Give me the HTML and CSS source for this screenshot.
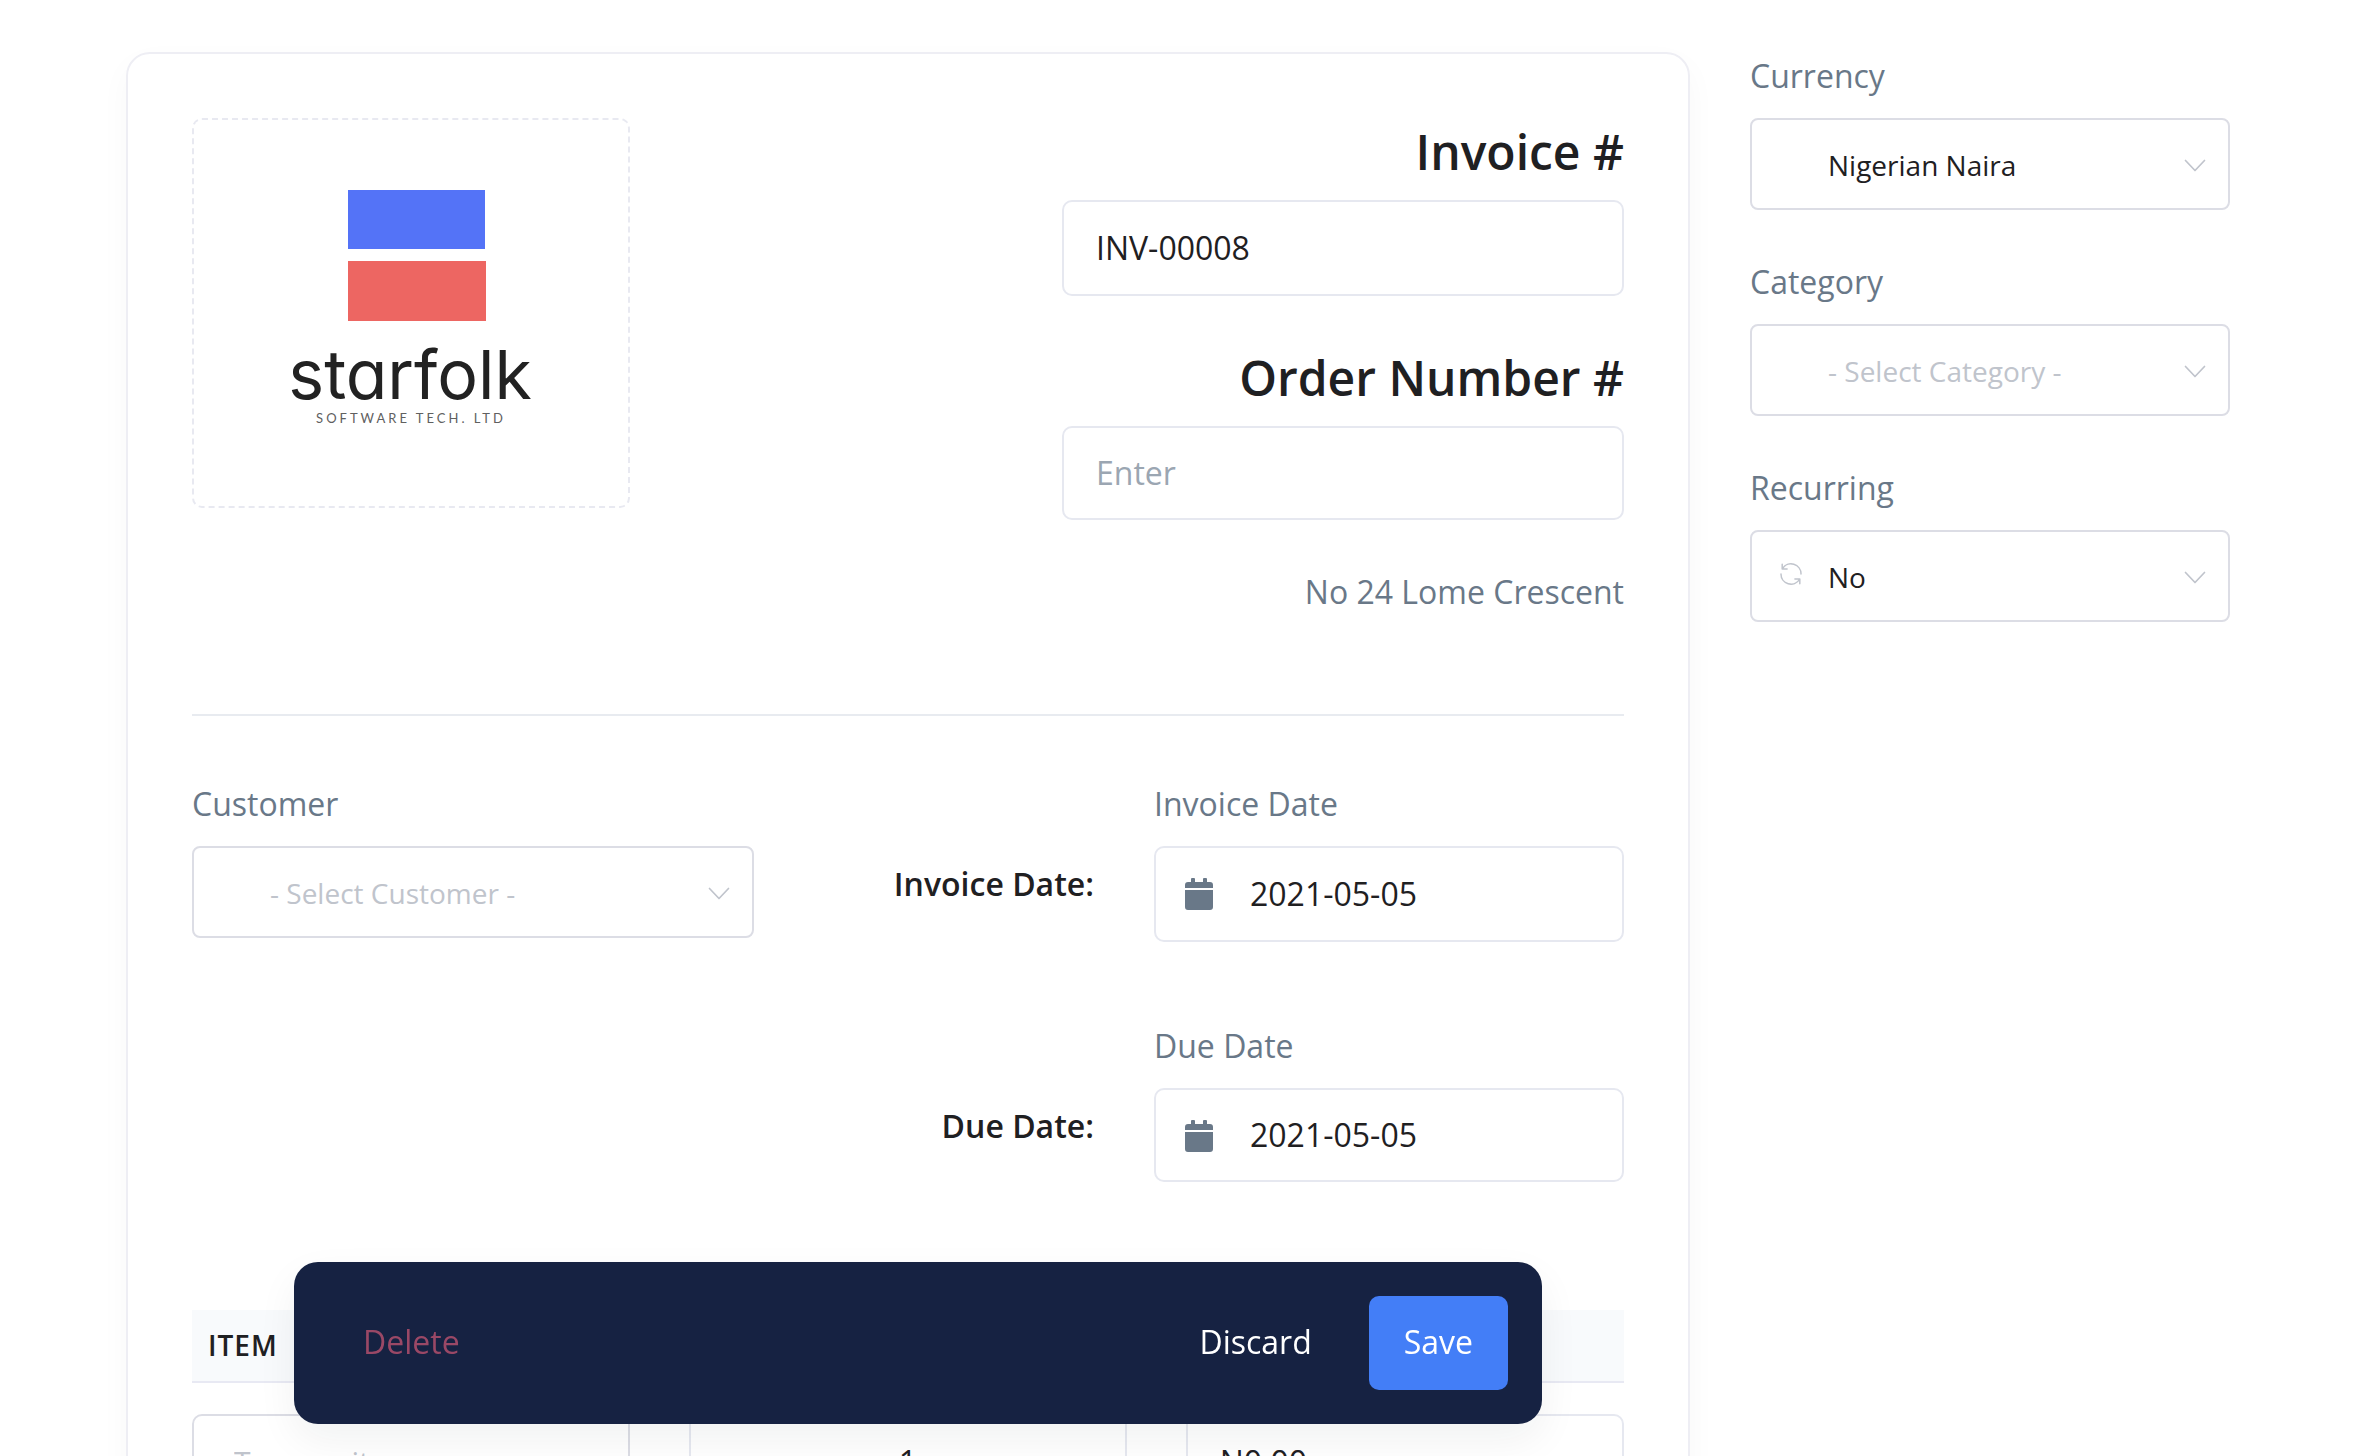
FILE: index.html
```html
<!DOCTYPE html>
<html lang="en">
<head>
<meta charset="utf-8">
<meta name="viewport" content="width=device-width, initial-scale=1">
<title>Invoice</title>
<link rel="stylesheet" href="styles.css">
</head>
<body>
<svg class="sprite" aria-hidden="true">
  <symbol id="chevron" viewBox="0 0 22 14"><path d="M1.5 1.5 11 11.5 20.5 1.5" fill="none" stroke="currentColor" stroke-width="1.7" stroke-linecap="round" stroke-linejoin="round"/></symbol>
  <symbol id="calendar" viewBox="0 0 28 32"><path d="M0 12h28v17a3 3 0 0 1-3 3H3a3 3 0 0 1-3-3zM28 10V7a3 3 0 0 0-3-3h-3V1a1 1 0 0 0-1-1h-2a1 1 0 0 0-1 1v3h-8V1a1 1 0 0 0-1-1H7a1 1 0 0 0-1 1v3H3a3 3 0 0 0-3 3v3z" fill="currentColor"/></symbol>
  <symbol id="refresh" viewBox="0 0 22 22"><path d="M2.5 5.6A10 10 0 0 1 21 11M2.2 1.2v4.9h4.9M1 11a10 10 0 0 0 18.5 5.4M19.8 20.8v-4.9h-4.9" fill="none" stroke="currentColor" stroke-width="1.5" stroke-linecap="round" stroke-linejoin="round"/></symbol>
</svg>
<form class="page">
  <main class="card">
    <section class="head">
      <div class="logo-box">
        <svg class="logo" viewBox="0 0 434 386" role="img" aria-label="Starfolk Software Tech. Ltd">
          <rect x="154" y="70" width="137" height="59" fill="#5473f7"/>
          <rect x="154" y="141" width="138" height="60" fill="#ed6662"/>
          <text class="logo-name" x="216" y="279" text-anchor="middle">starfolk</text>
          <text class="logo-sub" x="217" y="303" text-anchor="middle">SOFTWARE TECH. LTD</text>
        </svg>
      </div>
      <div class="numbers">
        <label class="title" for="invoice">Invoice #</label>
        <input class="input" id="invoice" value="INV-00008">
        <label class="title" for="order">Order Number #</label>
        <input class="input short" id="order" placeholder="Enter">
        <p class="address">No 24 Lome Crescent</p>
      </div>
    </section>
    <hr class="rule">
    <section class="details">
      <div class="field">
        <label class="label" for="customer">Customer</label>
        <div class="control">
          <select class="select empty" id="customer"><option>- Select Customer -</option></select>
          <svg class="chevron" aria-hidden="true"><use href="#chevron"/></svg>
        </div>
      </div>
      <div class="date-name">Invoice Date:</div>
      <div class="field">
        <label class="label" for="invoice-date">Invoice Date</label>
        <div class="control">
          <input class="input date" id="invoice-date" value="2021-05-05">
          <svg class="calendar" aria-hidden="true"><use href="#calendar"/></svg>
        </div>
      </div>
      <div class="date-name due">Due Date:</div>
      <div class="field">
        <label class="label" for="due-date">Due Date</label>
        <div class="control">
          <input class="input date short" id="due-date" value="2021-05-05">
          <svg class="calendar" aria-hidden="true"><use href="#calendar"/></svg>
        </div>
      </div>
    </section>
    <table class="items">
      <thead><tr><th scope="col">ITEM</th><th scope="col" aria-label="Quantity"></th><th scope="col" aria-label="Price"></th></tr></thead>
      <tbody><tr>
        <td><input class="input item-name" aria-label="Item" placeholder="Type an item name"></td>
        <td><input class="input quantity" aria-label="Quantity" value="1"></td>
        <td><input class="input" aria-label="Price" value="N0.00"></td>
      </tr></tbody>
    </table>
  </main>
  <aside class="side">
    <div class="field">
      <label class="label" for="currency">Currency</label>
      <div class="control">
        <select class="select" id="currency"><option>Nigerian Naira</option></select>
        <svg class="chevron" aria-hidden="true"><use href="#chevron"/></svg>
      </div>
    </div>
    <div class="field">
      <label class="label" for="category">Category</label>
      <div class="control">
        <select class="select empty" id="category"><option>- Select Category -</option></select>
        <svg class="chevron" aria-hidden="true"><use href="#chevron"/></svg>
      </div>
    </div>
    <div class="field">
      <label class="label" for="recurring">Recurring</label>
      <div class="control">
        <svg class="refresh" aria-hidden="true"><use href="#refresh"/></svg>
        <select class="select" id="recurring"><option>No</option></select>
        <svg class="chevron" aria-hidden="true"><use href="#chevron"/></svg>
      </div>
    </div>
  </aside>
  <div class="actions">
    <button class="button delete" type="button">Delete</button>
    <button class="button" type="button">Discard</button>
    <button class="button save" type="button">Save</button>
  </div>
</form>
</body>
</html>
```
FILE: styles.css
```css
*, *::before, *::after { box-sizing: border-box; }
body { margin: 0; background: #fff; color: #1f2022; font: 32px/48px "Open Sans", sans-serif; }
.sprite { position: absolute; width: 0; height: 0; }
.page {
  display: grid;
  grid-template-columns: 391fr 120fr;
  align-items: start;
  gap: 60px;
  height: 100vh;
  padding: 52px 128px 0 126px;
  overflow: auto;
  scrollbar-width: none;
}
.card {
  padding: 64px;
  border: 2px solid #eeeef4;
  border-radius: 24px;
  box-shadow: 0 12px 32px rgba(20, 30, 60, 0.03);
}

/* Logo and document numbers */
.head { display: flex; justify-content: space-between; align-items: flex-start; }
.logo-box { width: 438px; border: 2px dashed #e8e9f1; border-radius: 10px; }
.logo { display: block; width: 100%; height: 386px; }
.logo-name { fill: #222; font: 400 68px Inter, sans-serif; font-feature-settings: "cv11"; }
.logo-sub { fill: #606060; font: 400 13px Lato, sans-serif; letter-spacing: 3px; }
.numbers { display: flex; flex-direction: column; width: 562px; }
.title { margin-bottom: 14px; font-size: 48px; font-weight: 600; line-height: 68px; text-align: right; }
.numbers .input { margin-bottom: 48px; }
.address { margin: 0; color: #697888; text-align: right; }
.rule { height: 2px; margin: 98px 0 64px; border: 0; background: #e8ebf0; }

/* Form controls */
.field { min-width: 0; }
.label { display: block; margin-bottom: 18px; color: #697888; }
.control { position: relative; }
.input, .select {
  display: block;
  width: 100%;
  margin: 0;
  border: 2px solid #e6e8f0;
  border-radius: 10px;
  background: #fff;
  color: #1f2022;
  font: inherit;
}
.input { height: 96px; padding: 0 32px 2px; }
.input::placeholder { color: #9ba6b2; opacity: 1; }
.short { height: 94px; }
.date { padding-left: 94px; }
.select { height: 92px; padding: 2px 64px 0 76px; border-color: #dcdde5; border-radius: 8px; font-size: 28px; appearance: none; }
.empty { color: #c0c4cc; }
.chevron, .refresh { color: #c0c4cc; pointer-events: none; }
.chevron { position: absolute; top: 41px; right: 24px; width: 22px; height: 14px; }
.refresh { position: absolute; top: 33px; left: 30px; width: 22px; height: 22px; }
.calendar { position: absolute; top: 32px; left: 31px; width: 28px; height: 32px; color: #697888; }

/* Customer and dates */
.details { display: grid; grid-template-columns: 281fr 140fr 235fr; gap: 80px 60px; }
.date-name { padding-top: 80px; font-weight: 600; text-align: right; white-space: nowrap; }
.due { grid-column: 2; }

/* Line items */
.items { width: 100%; margin-top: 128px; border-collapse: collapse; table-layout: fixed; }
.items th { height: 72px; padding: 0 16px 2px; border-bottom: 2px solid #e8e9f3; background: #f8fafc; font-size: 28px; font-weight: 600; letter-spacing: 1px; text-align: left; }
.items td { padding: 31px 20px 0; }
.items td:first-child { padding: 31px 39px 0 0; }
.items td:last-child { padding: 31px 0 0 39px; }
.item-name { padding-left: 40px; border-color: #dcdde5; font-size: 30px; }
.item-name::placeholder { color: #c0c4cc; }
.quantity { text-align: center; }

.side { display: grid; gap: 48px; }

/* Floating action bar */
.actions {
  position: fixed;
  right: 816px;
  bottom: 32px;
  left: 294px;
  display: flex;
  align-items: center;
  gap: 22px;
  padding: 34px;
  border-radius: 24px;
  background: #162242;
  box-shadow: 0 16px 40px rgba(20, 30, 30, 0.06);
}
.button { height: 94px; padding: 0 35px 2px; border: 0; border-radius: 10px; background: none; color: #fff; font: inherit; }
.delete { margin-right: auto; color: #9a4866; }
.save { background: #437ef7; }
```
